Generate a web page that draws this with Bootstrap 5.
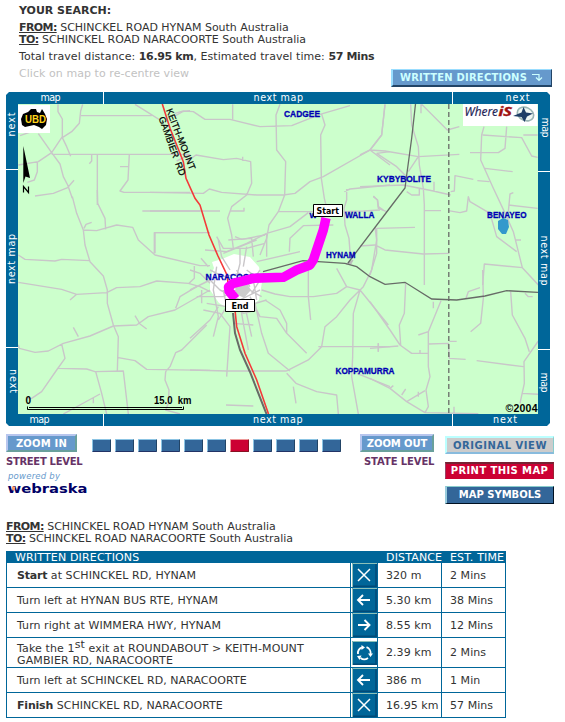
<!DOCTYPE html>
<html lang="en">
<head>
<meta charset="utf-8">
<title>Driving directions</title>
<link href="https://cdn.jsdelivr.net/npm/bootstrap@5.3.0/dist/css/bootstrap.min.css" rel="stylesheet">
<style>
body{font:11px/12px "DejaVu Sans",Verdana,sans-serif;color:#333;width:565px;height:722px;overflow:hidden;letter-spacing:-.02px;background:#fff}
u{font-weight:bold;letter-spacing:-.6px}
.summary{height:92px;padding:5px 13px 0 19px}
.gap5{margin-bottom:5px}
.loose{letter-spacing:.06px}
.loose b{letter-spacing:-.35px}
.hint{color:#c2c2c2}
.pix{font-weight:bold;font-size:10px;line-height:16px;height:18px;text-align:center;white-space:nowrap;border:1px solid;border-radius:0;padding:0;color:#fff;display:block}
.pix-dir{width:161px;background:#69c;border-color:#9df #246 #246 #9df;color:#cff;letter-spacing:.2px;border-width:1px 1px 2px 2px}
.pix-zoom{background:#69c;border:2px solid;border-color:#b8c6ee #69a09c #69a09c #b8c6ee;line-height:15px;letter-spacing:.2px}
.lvl{font-weight:bold;font-size:10px;color:#636;white-space:nowrap;margin-top:4px}
.tick{width:19px;height:13px;background:#369;border:1px solid;border-color:#8bc4e4 #224466 #223366 #8bc4e4;border-radius:1px}
.tick.now{background:#c03;border-color:#e99 #812 #812 #e99}
.controls{height:94px;padding:8px 11px 0 6px}
.in-col{width:86px}
.out-col{width:85px;margin-left:19px}
.act-col{width:109px;margin-top:2px}
.orig{background:#ccc;color:#369;border:2px solid;border-color:#bff #8cc #8bd #bff;border-right-width:1px;line-height:15px;letter-spacing:.52px}
.prt{background:#c03;border-color:#723 #923 #c03 #946;border-top-width:2px;letter-spacing:.4px;line-height:14px;height:17px}
.sym{background:#369;border-color:#8cc #012 #012 #9cd;border-left-width:2px;letter-spacing:0}
.dirs{width:500px;table-layout:fixed;border-collapse:separate;border-spacing:0;border-left:1px solid #069;margin:6px 0 0 6px;letter-spacing:.06px}
.dirs td{height:25px;border-right:1px solid #069;border-bottom:1px solid #069;padding:1px 0 0 8px;vertical-align:middle;line-height:12px;white-space:nowrap}
.dirs td:first-child{padding-left:10px}
.dirs b{letter-spacing:-.2px}
.dirs th{height:12px;background:#069;color:#fff;font-weight:normal;padding:0 0 0 8px;letter-spacing:.16px}
.dirs th div{height:12px;line-height:13px;white-space:nowrap}
.dirs td.turn{padding:0 0 0 1px}
.dirs .tall td{height:30px}
.dirs .tall td:first-child{padding-top:5px;letter-spacing:.12px}
.dirs sup{font-size:11px;line-height:0;top:-.36em;vertical-align:baseline}
.from2{padding:1px 6px 0;height:25px}
svg{display:block}
</style>
<script src="https://cdn.jsdelivr.net/npm/bootstrap@5.3.0/dist/js/bootstrap.bundle.min.js"></script>
</head>
<body>
<header class="summary d-flex justify-content-between">
  <div>
    <div class="gap5 fw-bold">YOUR SEARCH:</div>
    <div><u>FROM:</u> SCHINCKEL ROAD HYNAM South Australia</div>
    <div class="gap5"><u>TO:</u> SCHINCKEL ROAD NARACOORTE South Australia</div>
    <div class="gap5 text-nowrap loose">Total travel distance: <b>16.95 km</b>, Estimated travel time: <b>57 Mins</b></div>
    <div class="hint loose">Click on map to re-centre view</div>
  </div>
  <div class="d-flex align-items-end pb-1"><a class="pix pix-dir d-flex align-items-center justify-content-center text-decoration-none" style="margin-bottom:1px">WRITTEN DIRECTIONS<svg class="ms-1" width="13" height="9" viewBox="0 0 13 9" fill="none" stroke="#cff" stroke-width="1.2"><path d="M1 1.5H8V7M5 4.500L8 7.500L11 4.500"/></svg></a></div>
</header>

<main>
<svg width="550" height="334" viewBox="0 92 550 334" font-family="'DejaVu Sans',sans-serif" letter-spacing="0">
  <path fill="#069" d="M9 92H547L550 95V423L547 426H9L6 423V95Z"/>
  <clipPath id="mapclip"><path d="M18 104H538V414H18Z"/></clipPath>
  <g clip-path="url(#mapclip)">
    <path fill="#cfc" d="M18 104H538V414H18Z"/>
    <path fill="#fff" d="M222 259L234 254L250 257L259 267L262 282L259 300L248 308L232 311L219 303L210 290L210 277L214 268L212 262Z"/>
    <g fill="none" stroke="#c9c6c9" stroke-width="4.2" stroke-linejoin="round">
      <g transform="translate(0 85) scale(.33333)"><path d="M174 58V80L187 102V155L155 203L115 230L55 240M248 58L242 78L238 115L215 140L187 158L200 185L212 214M115 146L155 203L180 237L190 275L203 300L217 340M60 152L95 140M155 208H570M243 92H455M405 58L440 80L480 105M525 93L548 80L570 77M112 230V260L103 285L82 292M275 210V228L268 236M292 208V360M388 208L384 285L360 318L372 322H570M360 245H384M105 333L160 325L203 308L222 286M530 228L570 208"/></g>
      <g transform="translate(150 85) scale(.33333)"><path d="M75 85L100 78L130 80L165 103H240L330 125L425 122L510 88L600 62M248 58V103M390 58L378 90L380 195L407 230L404 330L385 380L357 420L350 460L330 510M505 88L515 88L525 120L512 150L514 280L523 340L528 360M705 58L695 150L660 195L520 275L480 290L435 325L400 330H320L215 322L178 312L160 325L0 322M110 230L138 210L220 224L260 220L302 230L305 295L290 330L245 365L233 400L245 450L250 490M278 215V228M0 378H210M240 378H282V368M660 195L720 240M680 205L720 200M583 320L600 312L720 300M590 312V345L582 370L585 420L597 460L600 500M385 380H490M580 380L640 378L690 375M670 335L683 345L685 365L700 375M475 383L420 425L350 445M550 420L460 422L420 460L418 500M15 505V443H160M255 455L275 463L345 450M200 455L220 490H290L345 475"/></g>
      <g transform="translate(360 85) scale(.33333)"><path d="M75 58L65 150L30 195L0 210M152 58L155 120L175 185L178 240L190 310L193 360V600M30 195L75 198L175 215L298 208M50 205L110 245L140 275M183 58V85M185 58L262 135L298 125M175 215L145 260M0 305L130 300L220 318L272 330M140 320L155 330H178V312M222 290V318M272 320L283 318L285 272L340 283M352 287L388 290M195 377H243M265 377L300 383L320 378L325 335L330 350L390 385L410 455L470 500M372 125L365 150L362 225L400 310L433 380L460 440L475 500L487 548L535 600M368 150L485 158L515 213L533 217M440 125L435 190L415 203H330M490 150H533M375 250L458 260M460 323L450 327L445 380M445 360L533 370M465 465H483M368 600L373 537L487 548M50 430L165 427M50 430V505L30 570M0 483L45 480L75 495L190 507L268 505M40 333L52 345L55 370L80 380"/></g>
      <g transform="translate(0 190) scale(.33333)"><path d="M217 20L230 70L250 120L255 165L270 215L310 258L322 300V340L340 405L355 440L352 543M292 0L293 40L315 85L317 118M250 120L290 122L350 105L398 112L415 150L465 195L600 227H630M275 97L258 103L252 115M427 63H600M463 190V128H630M55 195L75 208L165 213L185 208L270 212M55 277L185 298L230 313L320 308L350 293L420 290L470 273L565 280L600 290L630 305M210 330L230 313M583 228V265L567 280M55 465L58 475L105 487L145 483L190 460L270 438L340 408L410 405L445 380L525 360L630 300M220 412L235 440M405 377L420 402L440 417M185 462L195 505L170 540L125 605L95 625H80M175 535L260 537L285 545L370 543L385 672M287 545L305 610L320 672M190 672L300 612M280 640V622M355 503L405 512L440 538L630 541M497 545L510 530L527 488L545 480L620 405M497 545L495 570L507 600L505 640L497 660L540 672M527 355L540 320L590 290M603 205L625 230"/></g>
      <g transform="translate(190 190) scale(.33333)"><path d="M0 445L60 390L85 350M0 540L110 543H290M108 645L190 648M290 543L355 510L395 470L405 410L440 380L480 330L520 290L545 240L560 150L555 110M440 235L470 290L510 300L595 405M215 300L255 312L300 320H370L440 310L470 290M355 235V320L362 390M510 300L490 370L488 500L485 560L505 672M385 470H600M565 460V485M180 320L210 380L260 385L290 430L350 490M225 330L270 360L290 400V430M290 550L318 580L380 605L440 615L445 672M310 590L318 640M195 340L215 430L235 490L300 543M500 550L600 590M45 180L110 185L170 160L230 130M85 150L95 200L120 240M150 175V220L140 260M170 170L160 230M230 130V200M200 215L330 185M100 190L200 150M115 150L185 145L190 200"/>
      <path d="M0 300L60 270L90 300L150 330L210 300M20 320L100 320L160 290L215 320M60 240L100 260L150 250L180 290M80 230L70 300L85 380L70 440M50 340L110 350L180 345L230 330M40 360L90 370L120 410L110 560M150 340L160 400L175 480M60 280L30 250L0 240M100 300L110 350L85 390M130 340L160 370L200 360M140 240L160 280M210 240L190 270L200 330M35 300V340M170 240L210 270L185 310M165 350L185 440M130 400L190 405"/></g>
      <g transform="translate(370 270) scale(.33333)"><path d="M0 95L60 180L90 225L125 250H173M0 235L85 228M25 220V245M107 40L103 130L88 165L92 225M213 92L175 185L145 195M190 95V115M175 185V290L180 320L168 360L175 410L165 428L325 431M175 222L235 220L238 265L287 268M238 214H260M320 272L460 290M0 325L60 355L110 395L165 428M110 395L165 362M60 355L70 347M95 375L107 357M145 380V365M150 240V250M338 0L340 85L332 160L302 185M288 85L295 65L330 53M422 65L427 135L465 205L478 245M505 213L462 275L463 340L450 400M455 370L505 373M252 410V430M465 70L475 80H488"/></g>
    </g>
    <path d="M235 286L246 282L251 290L244 298L236 294Z" fill="#ccc"/>
    <path d="M346 264L353 260L351 264Z" fill="#bbb" stroke="#bbb"/>
    <g fill="none" stroke="#676b67" stroke-width="1.300">
      <path d="M415.500 104L411.700 138L406.700 175L405 188L386.700 212L348 263M263 271.600L303 260.600L345 263.300L356.700 266.700L370 276.700L385 284.300L405 282.300L431.700 299L456.700 300L485 296L506.700 290.700L538 292.300"/>
      <path d="M233 313L235 333L240 350L250 372L266.500 414" stroke-width="2"/>
      <path d="M448.800 104V414" stroke-dasharray="5 3"/>
    </g>
    <path d="M162.300 104L170 128.300L183.300 161.700L186 178.300L195 198.300L200 205L209 235L218 256L227 275L228.500 287M234.300 303L236.700 326.700L245 353.300L256.700 380L268.500 414" fill="none" stroke="#f33a3a" stroke-width="1.600"/>
    <path fill="#39c" d="M498 221L503 218L508 220L509 227L506 234L502 234L498 229Z"/>
    <g font-family="'Liberation Sans',sans-serif" font-weight="bold" font-size="9.300" fill="#0000b4" stroke="#0000b4" stroke-width=".3">
      <text x="284" y="117" textLength="36" lengthAdjust="spacingAndGlyphs">CADGEE</text>
      <text x="377" y="182" textLength="54" lengthAdjust="spacingAndGlyphs">KYBYBOLITE</text>
      <text x="309.500" y="218" font-size="8">W</text>
      <text x="345" y="218" textLength="29.500" lengthAdjust="spacingAndGlyphs">WALLA</text>
      <text x="326" y="258" textLength="29.500" lengthAdjust="spacingAndGlyphs">HYNAM</text>
      <text x="205.500" y="280" textLength="61" lengthAdjust="spacingAndGlyphs">NARACOORTE</text>
      <text x="335.500" y="373.500" textLength="59" lengthAdjust="spacingAndGlyphs">KOPPAMURRA</text>
      <text x="487" y="218" textLength="39.500" lengthAdjust="spacingAndGlyphs">BENAYEO</text>
    </g>
    <path d="M326 218L323.300 230L318.300 245L313.300 260L310 265L296.700 270L283.300 277.300L253.300 278.300L233.300 283.300L228.500 287L229 291L235.500 299" fill="none" stroke="#f0f" stroke-width="9.500" stroke-linejoin="round"/>
    <g font-size="9" font-weight="bold">
      <path fill="#fff" stroke="#000" d="M313.500 204.500H342.500V216.500H313.500ZM225.500 299.500H254.500V311.500H225.500Z"/>
      <text x="316.500" y="214" textLength="22.500" lengthAdjust="spacingAndGlyphs">Start</text><text x="231.500" y="309" textLength="17" lengthAdjust="spacingAndGlyphs">End</text>
    </g>
    <g font-family="'Liberation Sans',sans-serif" font-size="9.300" stroke="#000" stroke-width=".25">
      <text transform="translate(166 110) rotate(68.500)" textLength="65" lengthAdjust="spacingAndGlyphs">KEITH-MOUNT</text>
      <text transform="translate(158.500 118) rotate(70)" textLength="62" lengthAdjust="spacingAndGlyphs" xml:space="preserve">GAMBIER  RD</text>
    </g>
    <g font-family="'Liberation Sans',sans-serif" font-size="10" font-weight="bold">
      <text x="25.500" y="404">0</text><text x="154" y="404" textLength="37.500" lengthAdjust="spacingAndGlyphs" xml:space="preserve">15.0  km</text>
      <text x="505.500" y="411.500" textLength="32" font-size="10.500">©2004</text>
    </g>
    <path d="M27.500 406.500V409.500H183.500V406.500M29 407.500H182" fill="none" stroke="#000"/>
    <path d="M23.300 146L30 178L25.500 176.500L23.300 183Z"/>
    <path d="M23.500 192.500V186.500L28.500 192.500V186.500" fill="none" stroke="#000" stroke-width="1.200"/>
    <path fill="#fff" d="M18 105H50V133H18ZM463 104H537.500V126H463Z"/>
    <path d="M21 119L23 114L28 112L31 109L36 109L37 112L40 113L42 109L45 114L47 119L46 125L42 129L39 127L34 125L25 127L22 125Z"/>
    <text x="25" y="122.500" font-family="'Liberation Sans',sans-serif" font-size="10" font-weight="bold" fill="#ffd51a" textLength="21" lengthAdjust="spacingAndGlyphs">UBD</text>
    <g font-style="italic"><text x="464.500" y="115.500" font-size="12.500" fill="#225" stroke="#225" stroke-width=".2" font-family="'Open Sans',sans-serif" textLength="33.500" lengthAdjust="spacingAndGlyphs">Where</text>
    <text x="498.500" y="115.500" font-size="12.500" font-weight="bold" fill="#a01010" stroke="#a01010" stroke-width=".4" font-family="'Open Sans',sans-serif" textLength="13.500" lengthAdjust="spacingAndGlyphs">iS</text></g>
    <ellipse cx="525.500" cy="114" rx="8.500" ry="6.500" fill="#eef6f2" stroke="#9ab5b4" stroke-width="1.600" transform="rotate(25 525.500 114)"/>
    <path d="M513 116L521.500 112.500L523.500 107L526 112.500L533 113.500L527 116.500L524.500 122L521.500 117Z" fill="#1d3d66"/>
  </g>
  <path d="M103.500 92V104M452.500 92V104M103.500 414V426M452.500 414V426M6 169.500H18M6 347.500H18M538 171.500H550M538 349.500H550" stroke="#fff"/>
  <g fill="#fff" font-size="9.600">
    <text x="40.500" y="101" textLength="20">map</text><text x="253.500" y="101" textLength="49.500">next map</text><text x="505.500" y="101" textLength="24">next</text>
    <text x="29.500" y="423" textLength="20">map</text><text x="253" y="423" textLength="49.500">next map</text><text x="493" y="423" textLength="24">next</text>
    <text transform="translate(15 136.500) rotate(-90)" textLength="24">next</text>
    <text transform="translate(15 284) rotate(-90)" textLength="50">next map</text>
    <text transform="translate(10 369) rotate(90)" textLength="24">next</text>
    <text transform="translate(542 117.500) rotate(90)" textLength="20">map</text>
    <text transform="translate(541 235.500) rotate(90)" textLength="50">next map</text>
    <text transform="translate(541 372.500) rotate(90)" textLength="20">map</text>
  </g>
</svg>

<section class="controls d-flex">
  <div class="in-col">
    <a class="pix pix-zoom text-decoration-none" style="width:71px">ZOOM IN</a>
    <div class="lvl" style="letter-spacing:-.3px">STREET LEVEL</div>
    <svg width="84" height="28" viewBox="6 469 84 28" letter-spacing="0">
      <text x="8" y="480" font-family="'DejaVu Sans',sans-serif" font-size="8.500" font-style="italic" fill="#69c" textLength="52">powered by</text>
      <text x="7.500" y="493.500" font-family="'DejaVu Sans',sans-serif" font-size="12" font-weight="bold" fill="#006" textLength="80" lengthAdjust="spacingAndGlyphs">webraska</text>
      <path d="M11.500 487.500H15.500L14.500 491.500H12.500Z" fill="#f96"/>
    </svg>
  </div>
  <div class="d-flex" style="gap:4px;margin-top:5px">
    <i class="tick"></i><i class="tick"></i><i class="tick"></i><i class="tick"></i><i class="tick"></i><i class="tick"></i><i class="tick now"></i><i class="tick"></i><i class="tick"></i><i class="tick"></i><i class="tick"></i>
  </div>
  <div class="out-col">
    <a class="pix pix-zoom text-decoration-none" style="width:74px;letter-spacing:-.1px">ZOOM OUT</a>
    <div class="lvl" style="padding-left:4px;letter-spacing:-.1px">STATE LEVEL</div>
  </div>
  <div class="act-col">
    <a class="pix orig text-decoration-none">ORIGINAL VIEW</a>
    <a class="pix prt text-decoration-none" style="margin-top:8px">PRINT THIS MAP</a>
    <a class="pix sym text-decoration-none" style="margin-top:7px">MAP SYMBOLS</a>
  </div>
</section>

<section class="from2"><div><u>FROM:</u> SCHINCKEL ROAD HYNAM South Australia</div><div><u>TO:</u> SCHINCKEL ROAD NARACOORTE South Australia</div></section>

<svg width="0" height="0" class="position-absolute">
  <symbol id="key" viewBox="0 0 25 24"><path fill="#069" d="M0 0H25V24H0Z"/><path d="M.5 24V.5H25" fill="none" stroke="#8cc0b8"/><path d="M24 1V23.300H1" fill="none" stroke="#024a78" stroke-width="1.500"/></symbol>
  <symbol id="x" viewBox="0 0 25 24"><use href="#key"/><path d="M6 6L18 18M18 6L6 18" stroke="#fff" stroke-width="1.500"/></symbol>
  <symbol id="l" viewBox="0 0 25 24"><use href="#key"/><path d="M18 12H6M11 7L6 12L11 17" fill="none" stroke="#fff" stroke-width="1.900"/></symbol>
  <symbol id="r" viewBox="0 0 25 24"><use href="#key"/><path d="M6 12H17.500M12.500 7L17.500 12L12.500 17" fill="none" stroke="#fff" stroke-width="1.900"/></symbol>
  <symbol id="o" viewBox="0 0 25 24"><use href="#key"/><path d="M6 13A6.300 6.300 0 0 1 10 6.300M14.500 6.200A6.300 6.300 0 0 1 18.500 13.500M16 17A6.300 6.300 0 0 1 8.500 17" fill="none" stroke="#fff" stroke-width="1.800"/><path d="M9.500 4L13 6.500L9.500 9ZM16 12.500H21L18.500 16ZM5 15L9.500 14.500L7.500 19Z" fill="#fff"/></symbol>
</svg>
<table class="dirs">
  <colgroup><col style="width:344px"><col style="width:27px"><col style="width:64px"><col style="width:64px"></colgroup>
  <tr><th><div>WRITTEN DIRECTIONS</div></th><th></th><th><div>DISTANCE</div></th><th><div>EST. TIME</div></th></tr>
  <tr><td><b>Start</b> at SCHINCKEL RD, HYNAM</td><td class="turn"><svg width="25" height="24"><use href="#x"/></svg></td><td>320 m</td><td>2 Mins</td></tr>
  <tr><td>Turn left at HYNAN BUS RTE, HYNAM</td><td class="turn"><svg width="25" height="24"><use href="#l"/></svg></td><td>5.30 km</td><td>38 Mins</td></tr>
  <tr><td>Turn right at WIMMERA HWY, HYNAM</td><td class="turn"><svg width="25" height="24"><use href="#r"/></svg></td><td>8.55 km</td><td>12 Mins</td></tr>
  <tr class="tall"><td>Take the 1<sup>st</sup> exit at ROUNDABOUT &gt; KEITH-MOUNT<br>GAMBIER RD, NARACOORTE</td><td class="turn"><svg width="25" height="24"><use href="#o"/></svg></td><td>2.39 km</td><td>2 Mins</td></tr>
  <tr><td>Turn left at SCHINCKEL RD, NARACOORTE</td><td class="turn"><svg width="25" height="24"><use href="#l"/></svg></td><td>386 m</td><td>1 Min</td></tr>
  <tr><td><b>Finish</b> SCHINCKEL RD, NARACOORTE</td><td class="turn"><svg width="25" height="24"><use href="#x"/></svg></td><td>16.95 km</td><td>57 Mins</td></tr>
</table>
</main>
</body>
</html>
